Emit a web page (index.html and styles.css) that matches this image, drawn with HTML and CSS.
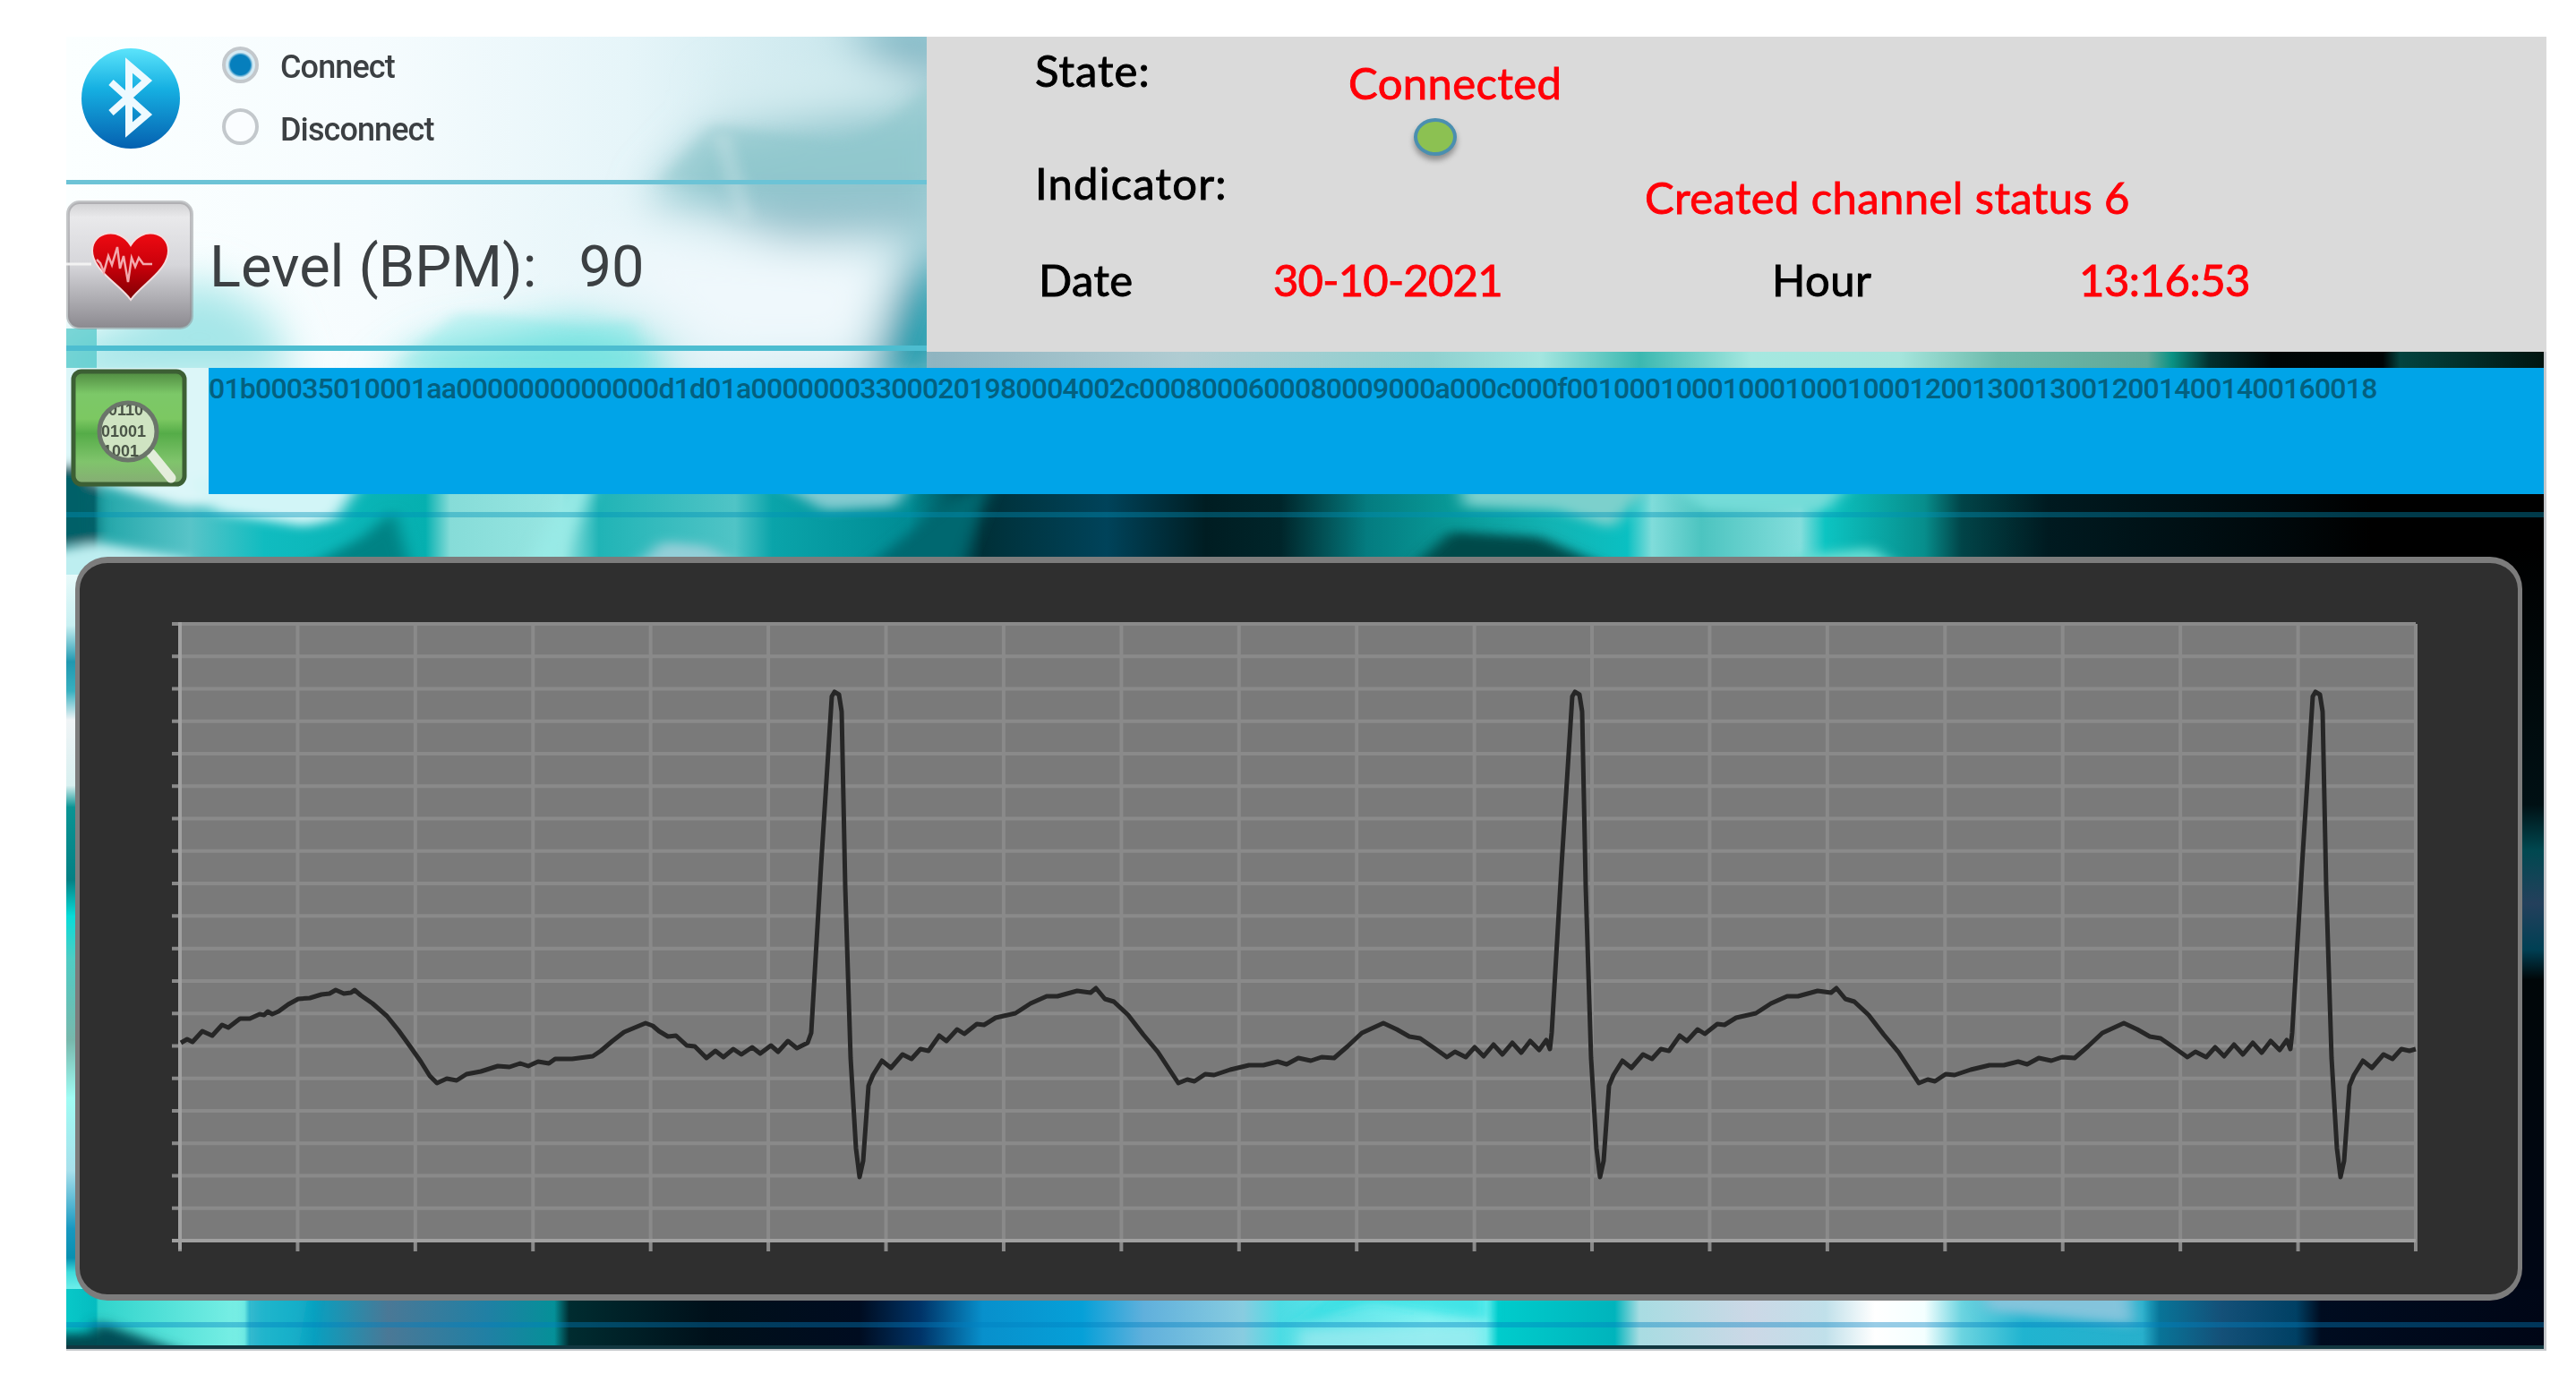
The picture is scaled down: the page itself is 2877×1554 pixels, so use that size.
FILE: index.html
```html
<!DOCTYPE html>
<html lang="en">
<head>
    <meta charset="UTF-8">
    <meta name="viewport" content="width=device-width, initial-scale=1.0">
    <title>ECG Monitor</title>
    <link rel="stylesheet" href="styles.css">
</head>
<body>
    <div class="app">
        <!-- Abstract teal wallpaper -->
        <svg class="wallpaper" viewBox="74 41 2767 1466" preserveAspectRatio="none">
            <defs>
                <filter id="soft" x="-30%" y="-30%" width="160%" height="160%"><feGaussianBlur stdDeviation="9 6"/></filter>
                <filter id="wide" x="-50%" y="-50%" width="200%" height="200%"><feGaussianBlur stdDeviation="24"/></filter>
                <linearGradient id="strip" gradientUnits="userSpaceOnUse" x1="74" x2="2841" y1="0" y2="0">
                    <stop offset="0" stop-color="#7fd3dc"/>
                    <stop offset=".04" stop-color="#cdeef1"/>
                    <stop offset=".16" stop-color="#aee4e8"/>
                    <stop offset=".2" stop-color="#5fcfd2"/>
                    <stop offset=".235" stop-color="#46c6cc"/>
                    <stop offset=".28" stop-color="#d5eef2"/>
                    <stop offset=".35" stop-color="#8fb4c0"/>
                    <stop offset=".45" stop-color="#b0ccd2"/>
                    <stop offset=".55" stop-color="#8fd0cf"/>
                    <stop offset=".595" stop-color="#a4e6e0"/>
                    <stop offset=".635" stop-color="#3bb8b0"/>
                    <stop offset=".68" stop-color="#a5e8e0"/>
                    <stop offset=".74" stop-color="#a5e5dc"/>
                    <stop offset=".78" stop-color="#6cbaab"/>
                    <stop offset=".84" stop-color="#62a898"/>
                    <stop offset=".85" stop-color="#0a9284"/>
                    <stop offset=".865" stop-color="#02302f"/>
                    <stop offset=".89" stop-color="#000606"/>
                    <stop offset=".935" stop-color="#000404"/>
                    <stop offset=".942" stop-color="#034440"/>
                    <stop offset="1" stop-color="#01140f"/>
                </linearGradient>
                <linearGradient id="middle" gradientUnits="userSpaceOnUse" x1="74" x2="2841" y1="0" y2="0">
                    <stop offset="0" stop-color="#037078"/>
                    <stop offset=".011" stop-color="#06616a"/>
                    <stop offset=".013" stop-color="#20a5a8"/>
                    <stop offset=".05" stop-color="#58c4c8"/>
                    <stop offset=".08" stop-color="#10bcc0"/>
                    <stop offset=".145" stop-color="#05b0b0"/>
                    <stop offset=".155" stop-color="#86dcd8"/>
                    <stop offset=".2" stop-color="#98e6e2"/>
                    <stop offset=".215" stop-color="#20b4b6"/>
                    <stop offset=".27" stop-color="#50c4c6"/>
                    <stop offset=".285" stop-color="#0aa4aa"/>
                    <stop offset=".34" stop-color="#008c94"/>
                    <stop offset=".37" stop-color="#003038"/>
                    <stop offset=".42" stop-color="#00435a"/>
                    <stop offset=".46" stop-color="#001d22"/>
                    <stop offset=".49" stop-color="#00252a"/>
                    <stop offset=".525" stop-color="#047c80"/>
                    <stop offset=".56" stop-color="#089a98"/>
                    <stop offset=".6" stop-color="#12b4b4"/>
                    <stop offset=".63" stop-color="#0ac0c2"/>
                    <stop offset=".64" stop-color="#80dcda"/>
                    <stop offset=".66" stop-color="#4cc4c0"/>
                    <stop offset=".7" stop-color="#84dedc"/>
                    <stop offset=".71" stop-color="#0cc4c2"/>
                    <stop offset=".75" stop-color="#078e8c"/>
                    <stop offset=".765" stop-color="#014448"/>
                    <stop offset=".8" stop-color="#001a20"/>
                    <stop offset=".89" stop-color="#00090c"/>
                    <stop offset=".93" stop-color="#000"/>
                    <stop offset="1" stop-color="#000"/>
                </linearGradient>
                <linearGradient id="bottom" gradientUnits="userSpaceOnUse" x1="74" x2="2841" y1="0" y2="0">
                    <stop offset="0" stop-color="#08c8c8"/>
                    <stop offset=".012" stop-color="#05bcc0"/>
                    <stop offset=".013" stop-color="#30d4cc"/>
                    <stop offset=".072" stop-color="#7cf0e6"/>
                    <stop offset=".074" stop-color="#40bcd0"/>
                    <stop offset=".1" stop-color="#08a0c0"/>
                    <stop offset=".13" stop-color="#4a7896"/>
                    <stop offset=".17" stop-color="#2080a4"/>
                    <stop offset=".197" stop-color="#059098"/>
                    <stop offset=".203" stop-color="#002c30"/>
                    <stop offset=".26" stop-color="#00101a"/>
                    <stop offset=".32" stop-color="#000c20"/>
                    <stop offset=".345" stop-color="#003468"/>
                    <stop offset=".37" stop-color="#0890cc"/>
                    <stop offset=".41" stop-color="#06a0d8"/>
                    <stop offset=".435" stop-color="#60b0dc"/>
                    <stop offset=".475" stop-color="#88cce0"/>
                    <stop offset=".49" stop-color="#4cdce4"/>
                    <stop offset=".55" stop-color="#80f2f2"/>
                    <stop offset=".573" stop-color="#70f0f0"/>
                    <stop offset=".578" stop-color="#00cccc"/>
                    <stop offset=".625" stop-color="#00b4bc"/>
                    <stop offset=".635" stop-color="#a8dce2"/>
                    <stop offset=".68" stop-color="#ccd8e6"/>
                    <stop offset=".71" stop-color="#c0e0ea"/>
                    <stop offset=".73" stop-color="#fff"/>
                    <stop offset=".75" stop-color="#f4ffff"/>
                    <stop offset=".765" stop-color="#6cd4e0"/>
                    <stop offset=".79" stop-color="#20b4d0"/>
                    <stop offset=".838" stop-color="#28b0cc"/>
                    <stop offset=".845" stop-color="#087498"/>
                    <stop offset=".87" stop-color="#145078"/>
                    <stop offset=".9" stop-color="#004064"/>
                    <stop offset=".91" stop-color="#000c20"/>
                    <stop offset="1" stop-color="#000616"/>
                </linearGradient>
                <linearGradient id="left" x1="0" y1="0" x2="0" y2="1">
                    <stop offset="0" stop-color="#e8fafa"/>
                    <stop offset=".07" stop-color="#c8f0f2"/>
                    <stop offset=".12" stop-color="#2098b0"/>
                    <stop offset=".16" stop-color="#38b0c0"/>
                    <stop offset=".2" stop-color="#f0f4f6"/>
                    <stop offset=".29" stop-color="#d8f0f0"/>
                    <stop offset=".32" stop-color="#0a9494"/>
                    <stop offset=".42" stop-color="#048084"/>
                    <stop offset=".47" stop-color="#08dcd8"/>
                    <stop offset=".53" stop-color="#50ccc4"/>
                    <stop offset=".64" stop-color="#78b8ac"/>
                    <stop offset=".72" stop-color="#a0fcf4"/>
                    <stop offset=".82" stop-color="#a8e0ec"/>
                    <stop offset=".9" stop-color="#1898c0"/>
                    <stop offset=".94" stop-color="#0890b0"/>
                    <stop offset=".96" stop-color="#40dcdc"/>
                    <stop offset="1" stop-color="#90fcf4"/>
                </linearGradient>
                <linearGradient id="right" x1="0" y1="0" x2="0" y2="1">
                    <stop offset="0" stop-color="#000"/>
                    <stop offset=".34" stop-color="#001014"/>
                    <stop offset=".4" stop-color="#004850"/>
                    <stop offset=".47" stop-color="#24405c"/>
                    <stop offset=".53" stop-color="#004054"/>
                    <stop offset=".57" stop-color="#000608"/>
                    <stop offset="1" stop-color="#000616"/>
                </linearGradient>
                <linearGradient id="header" x1="0" y1="0" x2="1" y2="0">
                    <stop offset="0" stop-color="#fbffff"/>
                    <stop offset=".35" stop-color="#f6fcfe"/>
                    <stop offset=".65" stop-color="#e6f5f9"/>
                    <stop offset="1" stop-color="#bfe2e8"/>
                </linearGradient>
                <clipPath id="headerClip"><rect x="74" y="41" width="961" height="370"/></clipPath>
                <clipPath id="middleClip"><rect x="74" y="411" width="2767" height="240"/></clipPath>
                <clipPath id="bottomClip"><rect x="74" y="1430" width="2767" height="77"/></clipPath>
            </defs>

            <rect x="74" y="393" width="2767" height="20" fill="url(#strip)"/>
            <g clip-path="url(#headerClip)">
                <rect x="74" y="41" width="961" height="370" fill="url(#header)"/>
                <g filter="url(#wide)">
                    <path d="M720 225L790 150L1000 120L1060 80V270L960 245L860 240Z" fill="#92c8cf"/>
                    <path d="M940 31H1060V120Z" fill="#5fa5b6"/>
                    <path d="M780 225L1040 215V255L880 268Z" fill="#94c0ca"/>
                    <path d="M420 430L480 390L640 362L720 375L760 430Z" fill="#62dedb"/>
                    <path d="M60 390L150 350L220 310L300 350L330 430H60Z" fill="#a5e6e8"/>
                    <path d="M800 95L1040 70V110L900 130L800 120Z" fill="#d4ecf0"/>
                    <path d="M1010 310L1060 270V430H970Z" fill="#1f98aa"/>
                    <path d="M640 260L1000 285L960 400L800 400L700 320Z" fill="#eff8fc"/>
                </g>
                <g filter="url(#soft)">
                    <path d="M735 205L795 140L940 158L985 140L1045 90V205Z" fill="#8fc8cc" opacity=".5"/>
                    <path d="M510 350L560 352L650 366L710 357L715 411H440Z" fill="#84e8e4" opacity=".35"/>
                    <path d="M806 150L832 245" stroke="#e4f2f4" stroke-width="8" opacity=".6"/>
                </g>
                <path d="M74 367H108V411H74Z" fill="#4cc6c8" opacity=".7"/>
            </g>

            <g clip-path="url(#middleClip)">
                <rect x="74" y="411" width="2767" height="240" fill="url(#middle)"/>
                <g filter="url(#soft)">
                    <path d="M50 395H250V565H200L110 540H50Z" fill="#dcf6f8"/>
                    <path d="M50 520H106V540L108 606H50Z" fill="#036068"/>
                    <path d="M50 616L110 606L210 624V660H50Z" fill="#bdeef0"/>
                    <path d="M215 535H405L375 580L340 588L240 572Z" fill="#d2f5f7"/>
                    <path d="M405 600L440 570L460 640H330Z" fill="#028284"/>
                    <path d="M640 535H665L620 640H585Z" fill="#98eae6"/>
                    <path d="M700 640L740 605L790 610L840 640Z" fill="#94cfd8"/>
                    <path d="M860 535H1020L1000 566L920 570Z" fill="#84cbd0"/>
                    <path d="M960 640L1060 560L1110 535L1070 640Z" fill="#026770"/>
                    <path d="M1570 640L1620 594L1720 600L1810 640Z" fill="#00484a"/>
                    <path d="M1630 535H1850L1800 590L1740 570L1635 566Z" fill="#7cd0cc"/>
                    <path d="M1860 535H2070L2040 570H1900Z" fill="#74dcd8"/>
                    <path d="M2000 622L2090 612L2130 640H2000Z" fill="#66dcd2"/>
                </g>
            </g>

            <rect x="74" y="642" width="20" height="812" fill="url(#left)"/>
            <rect x="2800" y="610" width="41" height="850" fill="url(#right)"/>
            <g clip-path="url(#bottomClip)">
                <rect x="74" y="1440" width="2767" height="67" fill="url(#bottom)"/>
                <g filter="url(#soft)">
                    <path d="M108 1476L230 1520H90Z" fill="#034c54"/>
                    <path d="M50 1490H108V1525H50Z" fill="#024850"/>
                    <path d="M345 1440L330 1525H280V1440Z" fill="#18b4cc" opacity=".6"/>
                    <path d="M1440 1480L1530 1455L1660 1475V1440H1500Z" fill="#20dce0" opacity=".6"/>
                    <path d="M1450 1485L1655 1480V1525H1450Z" fill="#a0eaf0" opacity=".7"/>
                    <path d="M2210 1440H2380L2384 1480L2220 1465Z" fill="#84c4dc"/>
                </g>
                <rect x="74" y="1503" width="2767" height="4" fill="#123740"/>
            </g>
            <rect x="74" y="572" width="2767" height="6" fill="#0092b8" opacity=".4"/>
            <rect x="74" y="1477" width="2767" height="6" fill="#0080c0" opacity=".4"/>
        </svg>

        <div class="top">
            <div class="controls">
                <div class="bluetooth">
                    <svg class="bt-icon" viewBox="0 0 112 114">
                        <defs>
                            <linearGradient id="btBlue" x1="0" y1="0" x2="0" y2="1">
                                <stop offset="0" stop-color="#5ce4fb"/>
                                <stop offset=".4" stop-color="#16b0e2"/>
                                <stop offset="1" stop-color="#0560b0"/>
                            </linearGradient>
                        </defs>
                        <ellipse cx="56" cy="57" rx="55" ry="56" fill="url(#btBlue)"/>
                        <path d="M34 39L74 75L54 92V20L74 37L34 73" fill="none" stroke="#eefaff" stroke-width="8"/>
                    </svg>
                    <div class="options">
                        <label class="option"><span class="radio checked"></span>Connect</label>
                        <label class="option"><span class="radio"></span>Disconnect</label>
                    </div>
                </div>
                <div class="level">
                    <svg class="heart-icon" viewBox="0 0 142 144">
                        <defs>
                            <linearGradient id="tile" x1="0" y1="0" x2="0" y2="1">
                                <stop offset="0" stop-color="#d0d0d2"/>
                                <stop offset=".12" stop-color="#e9e9eb"/>
                                <stop offset=".5" stop-color="#d6d6da"/>
                                <stop offset="1" stop-color="#8c8a90"/>
                            </linearGradient>
                            <linearGradient id="red" x1="0" y1="0" x2="0" y2="1">
                                <stop offset="0" stop-color="#ee0a12"/>
                                <stop offset=".5" stop-color="#c8000a"/>
                                <stop offset="1" stop-color="#7c0004"/>
                            </linearGradient>
                        </defs>
                        <rect x="2" y="2" width="138" height="140" rx="13" fill="url(#tile)" stroke="#8d8d92" stroke-opacity=".5" stroke-width="4"/>
                        <path d="M0 71H28" stroke="#f2f2f2" stroke-width="3"/>
                        <path d="M72 111C60 94 29 78 29 56C29 34 60 29 72 50C84 29 114 34 114 56C114 78 84 94 72 111Z" fill="url(#red)" stroke="#f3dfe0" stroke-width="2"/>
                        <path d="M34 66L38 70L42 80L47 62L51 72L57 52L60 76L64 62L69 91L73 64L77 74L81 64L86 71H96" fill="none" stroke="#f3a9ad" stroke-width="2.5"/>
                    </svg>
                    <span class="level-label">Level (BPM):</span>
                    <span class="level-value">90</span>
                </div>
            </div>

            <div class="status">
                <div class="status-row row-state">
                    <span class="key state">State:</span>
                    <div class="connection">
                        <span class="val connected">Connected</span>
                        <span class="led"></span>
                    </div>
                </div>
                <div class="status-row row-indicator">
                    <span class="key indicator">Indicator:</span>
                    <span class="val channel">Created channel status 6</span>
                </div>
                <div class="status-row">
                    <span class="key date">Date</span>
                    <span class="val date-value">30-10-2021</span>
                    <span class="key hour">Hour</span>
                    <span class="val hour-value">13:16:53</span>
                </div>
            </div>
        </div>

        <div class="data">
            <svg class="data-icon" viewBox="0 0 132 134">
                <defs>
                    <linearGradient id="green" x1="0" y1="0" x2="0" y2="1">
                        <stop offset="0" stop-color="#4f8a40"/>
                        <stop offset=".2" stop-color="#7cc868"/>
                        <stop offset=".42" stop-color="#7cc862"/>
                        <stop offset=".55" stop-color="#55ac48"/>
                        <stop offset=".8" stop-color="#80c46c"/>
                        <stop offset="1" stop-color="#86ac74"/>
                    </linearGradient>
                    <clipPath id="lens"><circle cx="64" cy="70" r="30"/></clipPath>
                </defs>
                <rect x="3" y="3" width="124" height="126" rx="9" fill="url(#green)" stroke="#3c5f34" stroke-width="5"/>
                <path d="M90 95L112 122" stroke="#eef3e8" stroke-opacity=".9" stroke-width="11" stroke-linecap="round"/>
                <circle cx="64" cy="70" r="32" fill="#cfe4c2" stroke="#6b756a" stroke-width="5"/>
                <g clip-path="url(#lens)" class="lens-text">
                    <text x="42" y="52">0110</text>
                    <text x="34" y="76">01001</text>
                    <text x="36" y="98">1001</text>
                </g>
            </svg>
            <div class="hex">01b00035010001aa0000000000000d1d01a000000033000201980004002c0008000600080009000a000c000f0010001000100010001000120013001300120014001400160018</div>
        </div>

        <div class="monitor">
            <svg id="chart" viewBox="90 629 2723 817"></svg>
        </div>
    </div>

    <script src="chart.js"></script>
</body>
</html>
```

FILE: styles.css
```css
* {
    margin: 0;
    padding: 0;
    box-sizing: border-box;
}
body {
    width: 2877px;
    height: 1554px;
    padding: 41px 0 0 74px;
    overflow: hidden;
    background-color: white;
    font-family: Roboto, sans-serif;
}
.app {
    position: relative;
    width: 2770px;
    height: 1468px;
    padding-right: 3px;
    background-color: #c6c8cb;
}
/* Wallpaper sits under all the content */
.wallpaper {
    position: absolute;
    top: 0;
    left: 0;
    width: 2767px;
    height: 1466px;
}
.top, .data, .monitor {
    position: relative;
}

/* Header */
.top {
    display: flex;
    width: 2770px;
    height: 352px;
}
.controls {
    width: 961px;
    color: #3c4043;
}
.bluetooth {
    display: flex;
    height: 165px;
    padding: 0 0 0 16px;
    border-bottom: 5px solid #6cc3d6;
}
.bt-icon {
    width: 112px;
    height: 114px;
    margin-top: 12px;
}
.options {
    margin-left: 46px;
}
.option {
    display: flex;
    align-items: center;
    height: 69.5px;
    line-height: 69.5px;
    font-size: 36px;
    font-weight: 500;
    letter-spacing: -0.9px;
}
.radio {
    width: 41px;
    height: 41px;
    margin: -7px 24px 0 0;
    border: 4px solid #c3c8cc;
    border-radius: 50%;
    background-color: #fafdff;
}
.radio.checked {
    background: radial-gradient(circle, #067fbd 11px, #d5eaf3 14px);
}
.level {
    display: flex;
    align-items: center;
    height: 186px;
    border-bottom: 6px solid #4dbdd0;
    font-size: 65px;
}
.heart-icon {
    width: 142px;
    height: 144px;
}
.level-label {
    margin: 4px 0 0 18px;
}
.level-value {
    margin: 4px 0 0 47px;
}

/* Status panel */
.status {
    width: 1809px;
    height: 352px;
    background-color: #dadada;
    font-family: Lato, sans-serif;
    font-size: 49px;
    line-height: 60px;
    letter-spacing: 0.4px;
    -webkit-text-stroke: 0.9px currentColor;
    white-space: nowrap;
}
.status-row {
    display: flex;
    align-items: flex-start;
    padding-left: 121px;
}
.row-state {
    height: 133px;
    padding-top: 7px;
}
.row-indicator {
    height: 108px;
}
.key {
    color: #000;
}
.val {
    color: #ff0008;
}
.state {
    width: 350px;
    letter-spacing: 1px;
}
.connection {
    display: flex;
    flex-direction: column;
    padding-top: 14px;
}
.led {
    width: 48px;
    height: 42px;
    margin: 10px 0 0 73px;
    border: 4px solid #4b8fb0;
    border-radius: 50%;
    background-color: #8cc152;
    box-shadow: 0 5px 6px rgba(0, 0, 0, 0.35);
}
.indicator {
    width: 681px;
    letter-spacing: 1.2px;
}
.channel {
    padding-top: 16px;
}
.date {
    width: 266px;
    padding-left: 4px;
}
.date-value {
    width: 557px;
    letter-spacing: -0.8px;
}
.hour {
    width: 343px;
}
.hour-value {
    letter-spacing: -0.5px;
}

/* Raw frame */
.data {
    display: flex;
    height: 159px;
    padding: 18px 0 0 5px;
}
.data-icon {
    width: 132px;
    height: 134px;
    margin-top: 1px;
}
.lens-text {
    font: bold 18px "Liberation Sans", sans-serif;
    fill: #4a5547;
}
.hex {
    flex: 1;
    height: 141px;
    margin-left: 22px;
    padding-top: 3px;
    background-color: #00a4e8;
    color: #04607f;
    font-size: 32px;
    line-height: 40px;
    font-weight: 500;
    letter-spacing: -0.79px;
    white-space: nowrap;
}

/* ECG */
.monitor {
    width: 2733px;
    height: 831px;
    margin: 70px 0 0 10px;
    border: 7px solid #7c7c7c;
    border-left-width: 5px;
    border-right-width: 5px;
    border-radius: 36px;
    background-color: #2f2f2f;
}
#chart {
    display: block;
    width: 100%;
    height: 100%;
}
.plot {
    fill: #7a7a7a;
}
.grid {
    fill: none;
    stroke: #8a8a8a;
    stroke-width: 4;
}
.axis {
    fill: none;
    stroke: #a0a0a0;
    stroke-width: 4;
}
.trace {
    fill: none;
    stroke: #262626;
    stroke-width: 5;
    stroke-linejoin: round;
}
```

FILE: chart.js
```javascript
const chart = document.getElementById('chart');
const left = 202, right = 2699, top1 = 697, bottom = 1386;
const stepX = (right - left) / 19;
const stepY = (bottom - top1) / 19;
const period = 827;

// Signal already on screen before the first R peak
const lead = [
    203,1165, 210,1161, 216,1164, 227,1152, 238,1157, 249,1145, 256,1148, 269,1138, 280,1138, 291,1133,
    296,1134, 300,1130, 305,1133, 312,1130, 323,1122, 334,1116, 347,1115, 360,1111, 369,1110, 376,1106,
    385,1110, 393,1109, 397,1106, 404,1112, 417,1121, 433,1135, 446,1151, 459,1169, 471,1186, 481,1202,
    489,1210, 500,1205, 511,1207, 522,1200, 538,1197, 557,1191, 570,1192, 582,1188, 591,1191, 602,1186,
    614,1188, 621,1183, 640,1183, 663,1180, 672,1174, 685,1163, 698,1153, 710,1148, 722,1143, 730,1146,
    737,1152, 747,1158, 756,1157, 768,1168, 777,1169, 790,1182, 800,1174, 809,1181, 820,1172, 829,1178,
    841,1170, 850,1177, 862,1168, 870,1175, 881,1163, 891,1171, 903,1165
];

// One full beat, starting at the R upstroke
const beat = [
    1734,1154, 1745,967, 1757,778, 1760,773, 1765,776, 1768,795, 1772,991, 1778,1182, 1784,1283, 1788,1315,
    1792,1297, 1798,1213, 1803,1201, 1813,1185, 1823,1193, 1836,1178, 1846,1183, 1856,1172, 1865,1174,
    1877,1157, 1885,1163, 1897,1150, 1905,1155, 1919,1144, 1927,1145, 1940,1137, 1962,1132, 1979,1121,
    1997,1113, 2009,1113, 2031,1107, 2046,1109, 2052,1104, 2062,1116, 2072,1119, 2088,1134, 2105,1156,
    2121,1175, 2144,1210, 2154,1206, 2162,1208, 2174,1200, 2184,1201, 2202,1195, 2223,1190, 2239,1190,
    2255,1186, 2265,1189, 2278,1182, 2292,1185, 2304,1181, 2318,1182, 2333,1169, 2349,1154, 2373,1143,
    2388,1150, 2402,1158, 2414,1160, 2430,1171, 2444,1181, 2453,1175, 2465,1181, 2475,1170, 2485,1180,
    2496,1167, 2506,1178, 2517,1165, 2527,1176, 2537,1163, 2547,1173, 2555,1162, 2559,1172
];

function toPoints(data, dx) {
    const points = [];
    for (let i = 0; i < data.length; i += 2) {
        if (data[i] + dx <= right) {
            points.push((data[i] + dx) + ',' + data[i + 1]);
        }
    }
    return points.join(' ');
}

let grid = '';
for (let i = 0; i <= 19; i++) {
    grid += `M${left + i * stepX} ${top1}V${bottom + 12}`;
    grid += `M${left - 9} ${top1 + i * stepY}H${right}`;
}

chart.innerHTML = `
    <rect class="plot" x="${left}" y="${top1 - 2}" width="${right - left}" height="${bottom - top1 + 4}"/>
    <path class="grid" d="${grid}"/>
    <path class="axis" d="M${left} ${top1 - 2}V${bottom + 10}M${left - 9} ${bottom}H${right}"/>
    <polyline class="trace" points="${toPoints(lead, 0)} ${toPoints(beat, -period)} ${toPoints(beat, 0)} ${toPoints(beat, period)} ${right},1172"/>
`;
```
